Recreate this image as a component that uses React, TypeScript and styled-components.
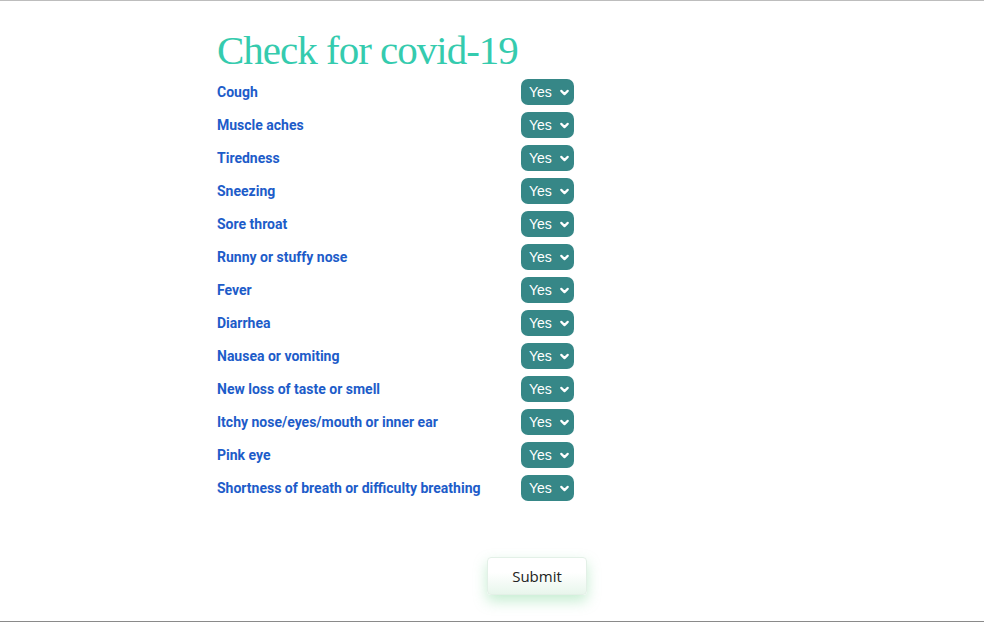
import React, { useState } from 'react';
import styled, { createGlobalStyle } from 'styled-components';
import { ChevronDown } from 'lucide-react';

const GlobalStyle = createGlobalStyle`
    html, body {
        margin: 0;
        padding: 0;
        background: #fff;
    }
`

const Page = styled.div`
    box-sizing: border-box;
    height: 622px;
    border-top: 1px solid #bdbdbd;
    border-bottom: 1px solid #8a8a8a;
    padding: 24px 0 0 217px;
`

const Form = styled.form`
    width: 357px;
`

const Title = styled.h1`
    margin: 0 0 4px 0;
    font-family: "Liberation Serif", "DejaVu Serif", serif;
    font-weight: 400;
    font-size: 41px;
    letter-spacing: -1px;
    line-height: 50px;
    color: #35cbae;
`

const List = styled.div`
    display: flex;
    flex-direction: column;
    gap: 7px;
`

const Row = styled.div`
    display: flex;
    align-items: center;
    justify-content: space-between;
    height: 26px;
`

const Label = styled.label`
    font-family: Roboto, "Liberation Sans", sans-serif;
    font-weight: 700;
    font-size: 14px;
    color: #1d5cc9;
`

const SelectWrap = styled.div`
    position: relative;
    width: 53px;
    height: 26px;
`

const Select = styled.select`
    appearance: none;
    -webkit-appearance: none;
    width: 100%;
    height: 100%;
    border: none;
    border-radius: 7px;
    background: #368787;
    color: #fff;
    font-family: "Liberation Sans", Arial, sans-serif;
    font-size: 14px;
    padding: 0 0 0 8px;
    outline: none;
    cursor: pointer;
`

const Chevron = styled.span`
    position: absolute;
    right: 3px;
    top: 7px;
    display: flex;
    color: #fff;
    pointer-events: none;
`

const Actions = styled.div`
    display: flex;
    padding: 56px 0 0 270px;
`

const SubmitButton = styled.button`
    width: 100px;
    height: 38px;
    border: 1px solid #e3f0e7;
    border-radius: 4px;
    background: linear-gradient(180deg, #ffffff 0%, #ffffff 40%, #e8f6ec 100%);
    box-shadow: 0 6px 14px rgba(110, 210, 140, 0.4);
    font-family: "Open Sans", "Noto Sans", sans-serif;
    font-size: 15px;
    color: #222;
    cursor: pointer;
`

const symptoms = [
    'Cough',
    'Muscle aches',
    'Tiredness',
    'Sneezing',
    'Sore throat',
    'Runny or stuffy nose',
    'Fever',
    'Diarrhea',
    'Nausea or vomiting',
    'New loss of taste or smell',
    'Itchy nose/eyes/mouth or inner ear',
    'Pink eye',
    'Shortness of breath or difficulty breathing',
];

const App: React.FC = () => {
    const [ answers, setAnswers ] = useState<Record<string, string>>({});

    return (
        <Page>
            <GlobalStyle />
            <Form onSubmit={ e => e.preventDefault() }>
                <Title>Check for covid-19</Title>
                <List>
                    { symptoms.map((name, i) => (
                        <Row key={ name }>
                            <Label htmlFor={ `s${ i }` }>{ name }</Label>
                            <SelectWrap>
                                <Select
                                    id={ `s${ i }` }
                                    value={ answers[ name ] || 'yes' }
                                    onChange={ e => setAnswers({ ...answers, [ name ]: e.target.value }) }
                                >
                                    <option value="yes">Yes</option>
                                    <option value="no">No</option>
                                </Select>
                                <Chevron><ChevronDown size={ 13 } strokeWidth={ 4 } /></Chevron>
                            </SelectWrap>
                        </Row>
                    )) }
                </List>
            </Form>
            <Actions>
                <SubmitButton type="submit">Submit</SubmitButton>
            </Actions>
        </Page>
    )
}

export default App;
